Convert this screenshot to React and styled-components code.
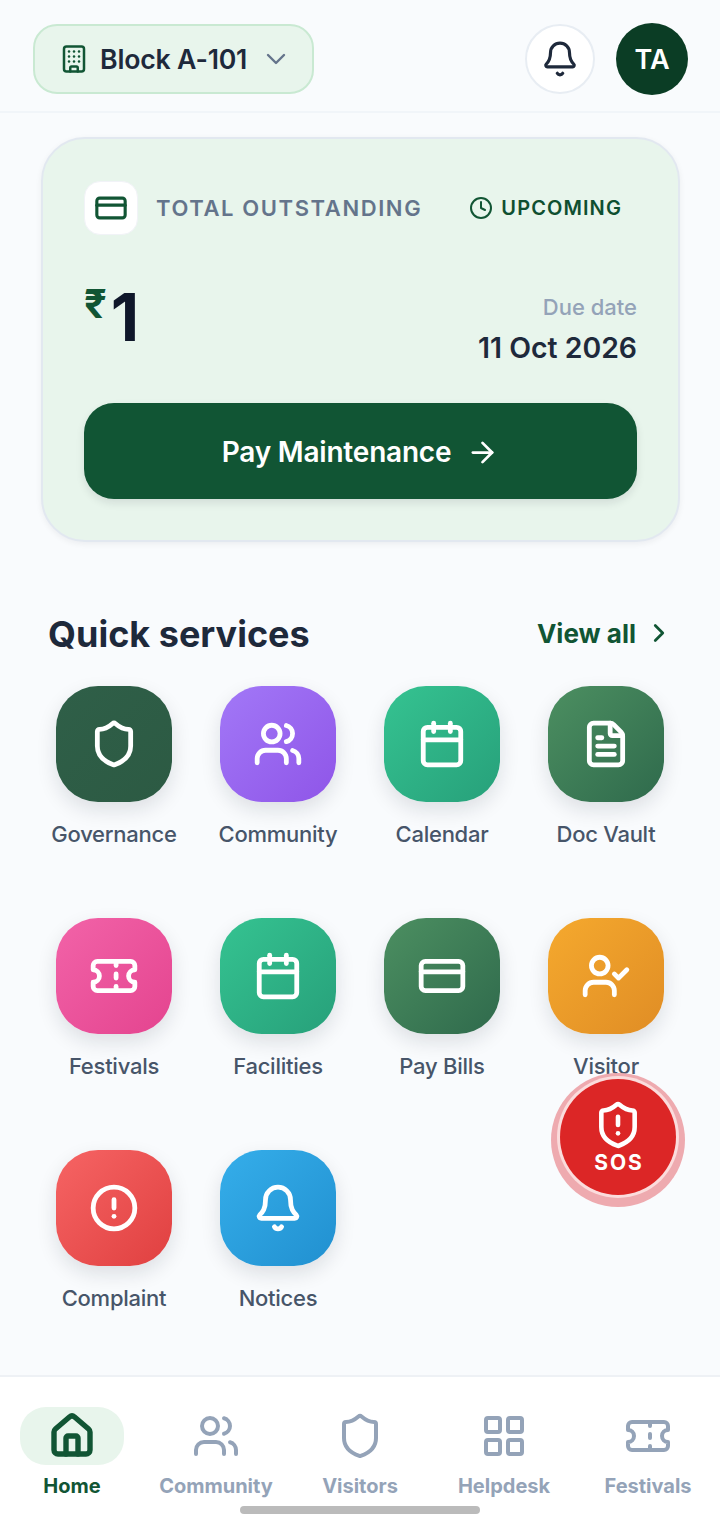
import styled, { createGlobalStyle } from "styled-components";
import {
  ArrowRight,
  Bell,
  Building,
  Calendar,
  ChevronDown,
  ChevronRight,
  CircleAlert,
  Clock,
  CreditCard,
  FileText,
  House,
  LayoutGrid,
  Shield,
  ShieldAlert,
  Ticket,
  UserCheck,
  Users,
} from "lucide-react";

const services = [
  { label: "Governance", Icon: Shield, from: "#2f5f48", to: "#2c5a43" },
  { label: "Community", Icon: Users, from: "#a278f7", to: "#8f55e8" },
  { label: "Calendar", Icon: Calendar, from: "#35c391", to: "#27a07a" },
  { label: "Doc Vault", Icon: FileText, from: "#4c8f61", to: "#2f6a4c" },
  { label: "Festivals", Icon: Ticket, from: "#f263a8", to: "#e4448f" },
  { label: "Facilities", Icon: Calendar, from: "#35c391", to: "#27a07a" },
  { label: "Pay Bills", Icon: CreditCard, from: "#4c8f61", to: "#2f6a4c" },
  { label: "Visitor", Icon: UserCheck, from: "#f5a92e", to: "#e08d25" },
  { label: "Complaint", Icon: CircleAlert, from: "#f66464", to: "#e04040" },
  { label: "Notices", Icon: Bell, from: "#35aeea", to: "#2190d0" },
];

const tabs = [
  { label: "Home", Icon: House, active: true },
  { label: "Community", Icon: Users },
  { label: "Visitors", Icon: Shield },
  { label: "Helpdesk", Icon: LayoutGrid },
  { label: "Festivals", Icon: Ticket },
];

export default function App() {
  return (
    <Page>
      <GlobalStyle />
      <Header>
        <BlockSelect>
          <Building size={30} color="#115534" strokeWidth={2} />
          <BlockName>Block A-101</BlockName>
          <ChevronDown size={32} color="#64748b" strokeWidth={1.8} />
        </BlockSelect>
        <HeaderActions>
          <BellButton>
            <Bell size={38} color="#1e293b" strokeWidth={2} />
          </BellButton>
          <Avatar>TA</Avatar>
        </HeaderActions>
      </Header>

      <Main>
        <DueCard>
          <CardTop>
            <CardIcon>
              <CreditCard size={34} color="#115534" strokeWidth={2.2} />
            </CardIcon>
            <CardTitle>TOTAL OUTSTANDING</CardTitle>
            <Status>
              <Clock size={24} color="#115534" strokeWidth={2} />
              UPCOMING
            </Status>
          </CardTop>
          <AmountRow>
            <Amount>
              <Rupee>₹</Rupee>
              <AmountValue>1</AmountValue>
            </Amount>
            <DueInfo>
              <DueLabel>Due date</DueLabel>
              <DueDate>11 Oct 2026</DueDate>
            </DueInfo>
          </AmountRow>
          <PayButton>
            Pay Maintenance
            <ArrowRight size={33} color="#fff" strokeWidth={2} />
          </PayButton>
        </DueCard>

        <Services>
          <SectionHead>
            <SectionTitle>Quick services</SectionTitle>
            <ViewAll>
              View all
              <ChevronRight size={30} color="#115534" strokeWidth={2.2} />
            </ViewAll>
          </SectionHead>
          <ServiceGrid>
            {services.map(({ label, Icon, from, to }) => (
              <Service key={label}>
                <Tile $from={from} $to={to}>
                  <Icon size={50} color="#fff" strokeWidth={2.3} />
                </Tile>
                <ServiceLabel>{label}</ServiceLabel>
              </Service>
            ))}
          </ServiceGrid>
        </Services>

        <SosButton>
          <ShieldAlert size={50} color="#fff" strokeWidth={2.2} />
          <SosText>SOS</SosText>
        </SosButton>
      </Main>

      <BottomNav>
        {tabs.map(({ label, Icon, active }) => (
          <Tab key={label}>
            <TabIcon $active={active}>
              <Icon size={48} color={active ? "#115534" : "#94a3b8"} strokeWidth={active ? 2.7 : 2} />
            </TabIcon>
            <TabLabel $active={active}>{label}</TabLabel>
          </Tab>
        ))}
        <HomeBar />
      </BottomNav>
    </Page>
  );
}

const GlobalStyle = createGlobalStyle`
  html, body {
    margin: 0;
    padding: 0;
    background: #f9fbfd;
    font-family: Inter, "Noto Sans", sans-serif;
  }
`;

const Page = styled.div`
  display: flex;
  flex-direction: column;
  width: 720px;
  height: 1527px;
  overflow: hidden;
  background: #f9fbfd;
`;

const Header = styled.header`
  display: flex;
  align-items: flex-start;
  justify-content: space-between;
  box-sizing: border-box;
  height: 113px;
  padding: 24px 32px 0 33px;
  border-bottom: 2px solid #f1f5f9;
`;

const BlockSelect = styled.div`
  display: flex;
  align-items: center;
  gap: 11px;
  box-sizing: border-box;
  width: 281px;
  height: 70px;
  padding-left: 24px;
  background: #e8f5ec;
  border: 2px solid #c9e9d2;
  border-radius: 24px;

  svg {
    flex-shrink: 0;
  }
`;

const BlockName = styled.span`
  margin-right: 2px;
  font-size: 26.7px;
  font-weight: 600;
  letter-spacing: -0.2px;
  color: #1e293b;
  white-space: nowrap;
`;

const HeaderActions = styled.div`
  display: flex;
  align-items: center;
  height: 70px;
  gap: 21px;
`;

const BellButton = styled.div`
  display: flex;
  align-items: center;
  justify-content: center;
  box-sizing: border-box;
  width: 70px;
  height: 70px;
  background: #fff;
  border: 2px solid #e8edf3;
  border-radius: 50%;
`;

const Avatar = styled.div`
  display: flex;
  align-items: center;
  justify-content: center;
  width: 72px;
  height: 72px;
  background: #0b3d25;
  border-radius: 50%;
  color: #fff;
  font-size: 27px;
  font-weight: 600;
`;

const Main = styled.main`
  position: relative;
  flex: 1;
  min-height: 0;
  padding-top: 24px;
`;

const DueCard = styled.section`
  box-sizing: border-box;
  width: 639px;
  height: 405px;
  margin-left: 41px;
  padding: 42px 41px 0 41px;
  background: #e8f5ec;
  border: 2px solid #e2e8f0;
  border-radius: 44px;
  box-shadow: 0 2px 6px rgba(15, 23, 42, 0.06);
`;

const CardTop = styled.div`
  display: flex;
  align-items: center;
`;

const CardIcon = styled.div`
  display: flex;
  align-items: center;
  justify-content: center;
  box-sizing: border-box;
  width: 54px;
  height: 54px;
  background: #fff;
  border: 1px solid #f1f3f7;
  border-radius: 16px;
`;

const CardTitle = styled.span`
  margin-left: 18px;
  font-size: 22px;
  font-weight: 600;
  letter-spacing: 1.6px;
  color: #64748b;
  white-space: nowrap;
`;

const Status = styled.span`
  display: flex;
  align-items: center;
  gap: 8px;
  margin-left: auto;
  margin-right: 15px;
  font-size: 20px;
  font-weight: 600;
  letter-spacing: 1.1px;
  color: #0f4f30;
`;

const AmountRow = styled.div`
  display: flex;
  align-items: flex-start;
  justify-content: space-between;
  height: 168px;
`;

const Amount = styled.div`
  display: flex;
  align-items: flex-start;
  margin-top: 45px;
`;

const Rupee = styled.span`
  font-size: 40px;
  line-height: 48px;
  font-weight: 700;
  color: #115534;
`;

const AmountValue = styled.span`
  margin-left: 4px;
  margin-top: 1px;
  font-size: 66px;
  line-height: 72px;
  font-weight: 700;
  color: #0f172a;
`;

const DueInfo = styled.div`
  display: flex;
  flex-direction: column;
  align-items: flex-end;
  margin-top: 57px;
  gap: 8px;
`;

const DueLabel = styled.span`
  font-size: 22px;
  line-height: 30px;
  font-weight: 500;
  color: #94a3b8;
`;

const DueDate = styled.span`
  font-size: 28.4px;
  line-height: 36px;
  font-weight: 600;
  color: #1e293b;
`;

const PayButton = styled.div`
  display: flex;
  align-items: center;
  justify-content: center;
  gap: 15px;
  box-sizing: border-box;
  width: 553px;
  height: 96px;
  padding-top: 2px;
  background: #115534;
  border-radius: 30px;
  box-shadow: 0 4px 8px rgba(15, 23, 42, 0.1);
  color: #fff;
  font-size: 28px;
  font-weight: 600;
  letter-spacing: -0.2px;
`;

const Services = styled.section`
  padding: 0 32px;
`;

const SectionHead = styled.div`
  display: flex;
  align-items: center;
  justify-content: space-between;
  height: 50px;
  margin-top: 67px;
  padding: 0 14px 0 16px;
`;

const SectionTitle = styled.h2`
  margin: 0;
  font-size: 36px;
  font-weight: 700;
  color: #1e293b;
`;

const ViewAll = styled.span`
  display: flex;
  align-items: center;
  gap: 8px;
  padding-bottom: 2px;
  font-size: 26px;
  font-weight: 700;
  color: #115534;
`;

const ServiceGrid = styled.div`
  display: grid;
  grid-template-columns: repeat(4, 164px);
  grid-auto-rows: 232px;
  margin-top: 27px;
`;

const Service = styled.div`
  display: flex;
  flex-direction: column;
  align-items: center;
`;

const Tile = styled.div`
  display: flex;
  align-items: center;
  justify-content: center;
  width: 116px;
  height: 116px;
  background: linear-gradient(135deg, ${(p) => p.$from}, ${(p) => p.$to});
  border-radius: 42px;
  box-shadow: 0 8px 20px rgba(15, 23, 42, 0.12);
`;

const ServiceLabel = styled.span`
  margin-top: 18px;
  font-size: 22px;
  line-height: 28px;
  font-weight: 500;
  letter-spacing: -0.25px;
  color: #475569;
  white-space: nowrap;
`;

const SosButton = styled.div`
  position: absolute;
  right: 44px;
  top: 966px;
  display: flex;
  flex-direction: column;
  align-items: center;
  justify-content: center;
  gap: 1px;
  width: 116px;
  height: 116px;
  background: #dc2626;
  border-radius: 50%;
  box-shadow: 0 0 0 3px #fbdcdc, 0 3px 0 9px #eeaaaf;
`;

const SosText = styled.span`
  padding-left: 2px;
  font-size: 21px;
  line-height: 24px;
  font-weight: 700;
  letter-spacing: 2px;
  color: #fff;
`;

const BottomNav = styled.nav`
  position: relative;
  display: grid;
  grid-template-columns: repeat(5, 144px);
  box-sizing: border-box;
  height: 152px;
  padding-top: 30px;
  background: #fff;
  border-top: 2px solid #eef1f5;
`;

const Tab = styled.div`
  display: flex;
  flex-direction: column;
  align-items: center;
`;

const TabIcon = styled.div`
  display: flex;
  align-items: center;
  justify-content: center;
  width: 104px;
  height: 58px;
  background: ${(p) => (p.$active ? "#e8f5ec" : "transparent")};
  border-radius: 26px;
`;

const TabLabel = styled.span`
  margin-top: 7px;
  font-size: 20px;
  line-height: 28px;
  font-weight: 700;
  color: ${(p) => (p.$active ? "#115534" : "#94a3b8")};
  white-space: nowrap;
`;

const HomeBar = styled.div`
  position: absolute;
  left: 240px;
  bottom: 13px;
  width: 240px;
  height: 8px;
  background: #bbbbbb;
  border-radius: 4px;
`;
